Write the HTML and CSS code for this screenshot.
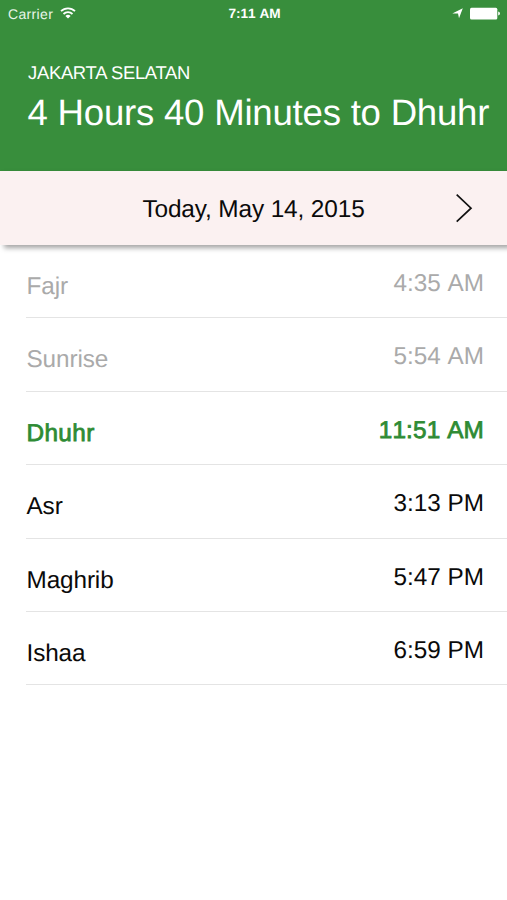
FILE: index.html
```html
<!DOCTYPE html>
<html lang="en">
<head>
<meta charset="utf-8">
<title>Prayer Times</title>
<link rel="stylesheet" href="styles.css">
</head>
<body>
<header class="header">
  <div class="status">
    <div class="status-left"><span class="carrier">Carrier</span>
      <svg class="wifi" width="16" height="12" viewBox="0 0 16 12" fill="none" stroke="#fff" stroke-width="1.8"><path d="M1 4.2a10 10 0 0 1 14 0M3.5 7a6.5 6.5 0 0 1 9 0"/><path d="M5.4 8.9a3.8 3.8 0 0 1 5.2 0L8 11.6z" fill="#fff" stroke="none"/></svg>
    </div>
    <span class="clock">7:11 AM</span>
    <div class="status-right">
      <svg width="11" height="11" viewBox="0 0 11 11" fill="#fff"><path d="M10.8 .3 7 10.2 6 5.6 .3 5.4z"/></svg>
      <svg width="31" height="13" viewBox="0 0 31 13" fill="#fff"><rect x="0" y=".8" width="27.3" height="11.6" rx="1.5"/><path d="M28.2 4.6q1.8.5 1.8 2t-1.8 2z"/></svg>
    </div>
  </div>
  <div class="place">JAKARTA SELATAN</div>
  <h1 class="countdown">4 Hours 40 Minutes to Dhuhr</h1>
</header>
<nav class="datebar">
  <span class="date">Today, May 14, 2015</span>
  <svg class="next" width="18" height="30" viewBox="0 0 18 30" fill="none" stroke="#111" stroke-width="1.7"><path d="M1.7 1.7 16 15.2 1.7 28.7"/></svg>
</nav>
<main class="times">
  <div class="row past"><span class="name">Fajr</span><span class="time">4:35 AM</span></div>
  <div class="row past"><span class="name">Sunrise</span><span class="time">5:54 AM</span></div>
  <div class="row active"><span class="name">Dhuhr</span><span class="time">11:51 AM</span></div>
  <div class="row"><span class="name">Asr</span><span class="time">3:13 PM</span></div>
  <div class="row"><span class="name">Maghrib</span><span class="time">5:47 PM</span></div>
  <div class="row"><span class="name">Ishaa</span><span class="time">6:59 PM</span></div>
</main>
</body>
</html>
```
FILE: styles.css
```css
* { box-sizing: border-box; }
body {
  margin: 0;
  height: 900px;
  overflow: hidden;
  background: #fff;
  color: #0a0a0a;
  font-family: "Liberation Sans", Arial, sans-serif;
  text-rendering: geometricPrecision;
  white-space: nowrap;
}
.header {
  height: 171px;
  background: #388e3c;
  color: #fff;
}
.status {
  display: grid;
  grid-template-columns: 1fr auto 1fr;
  align-items: center;
  height: 27px;
  padding: 0 6px 0 8px;
  font-size: 14px;
}
.status-left, .status-right { display: flex; align-items: center; }
.status-left { gap: 7px; }
.wifi { margin-top: -2px; }
.carrier { letter-spacing: .35px; color: #e9f6e9; }
.status-right { justify-content: flex-end; gap: 7px; }
.clock { font-weight: bold; font-size: 13.6px; font-kerning: none; }
.place {
  padding: 35px 0 0 28px;
  font-size: 18.4px;
  line-height: 22px;
  letter-spacing: -.28px;
}
.countdown {
  margin: 8px 0 0 27.5px;
  font-size: 36.6px;
  font-weight: 400;
  line-height: 42px;
  letter-spacing: -.22px;
}
.datebar {
  position: relative;
  display: grid;
  grid-template-columns: 1fr auto 1fr;
  align-items: center;
  height: 74px;
  padding-right: 34px;
  padding-left: 34px;
  background: #fbf1f1;
  box-shadow: 4px 3px 5px rgba(0, 0, 0, .36);
}
.date { grid-column: 2; padding-top: 3px; font-size: 24.4px; letter-spacing: -.13px; }
.next { justify-self: end; }
.row {
  display: flex;
  justify-content: space-between;
  height: 73.4px;
  margin-left: 26px;
  padding: 25px 23px 0 0;
  border-bottom: 1px solid #e4e4e4;
  font-size: 24.3px;
  line-height: 28px;
}
.name { padding-top: 3px; padding-left: .5px; letter-spacing: -.1px; }
.time { font-kerning: none; }
.past { color: #aaa; }
.active { color: #2e8b34; -webkit-text-stroke: .8px #2e8b34; }
.active .name { letter-spacing: .4px; }
.active .time { letter-spacing: .15px; }
```
